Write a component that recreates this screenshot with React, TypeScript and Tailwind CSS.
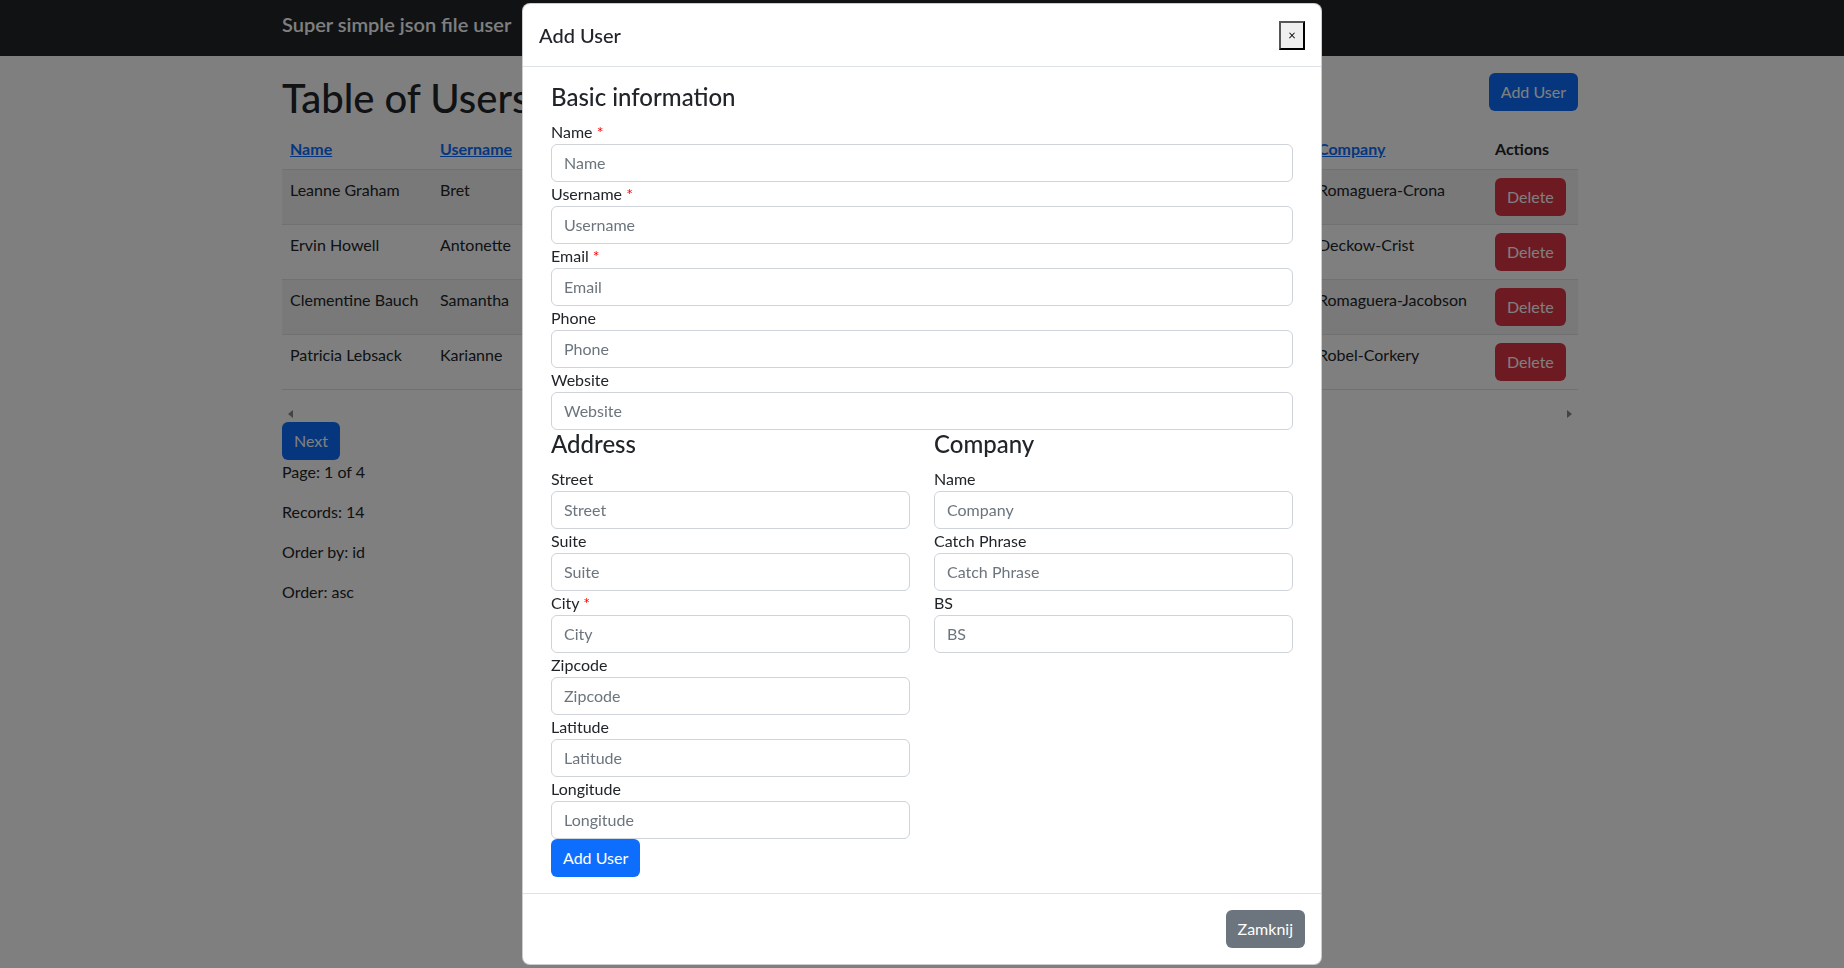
import React from 'react';

interface User {
  name: string;
  username: string;
  company: string;
}

const users: User[] = [
  { name: 'Leanne Graham', username: 'Bret', company: 'Romaguera-Crona' },
  { name: 'Ervin Howell', username: 'Antonette', company: 'Deckow-Crist' },
  { name: 'Clementine Bauch', username: 'Samantha', company: 'Romaguera-Jacobson' },
  { name: 'Patricia Lebsack', username: 'Karianne', company: 'Robel-Corkery' },
];

interface FieldProps {
  label: string;
  placeholder: string;
  required?: boolean;
}

const Field: React.FC<FieldProps> = ({ label, placeholder, required }) => (
  <div>
    <label className="block leading-[24px]">
      {label}
      {required && <span className="text-[#ff0000]"> *</span>}
    </label>
    <input
      placeholder={placeholder}
      className="block w-full h-[38px] px-[12px] bg-white border border-[#ced4da] rounded-[6px] text-[16px] placeholder:text-[#6c757d] outline-none"
    />
  </div>
);

const SortLink: React.FC<{ label: string }> = ({ label }) => (
  <a href="#" className="text-[#0d6efd] underline">{label}</a>
);

const App: React.FC = () => {
  return (
    <div className="min-h-screen bg-white text-[#212529] text-[16px] leading-[24px] font-[Lato,'Liberation_Sans',sans-serif]">
      <nav className="h-[56px] bg-[#212529]">
        <div className="ml-[282px] w-[1296px] pt-[9px]">
          <span className="text-white text-[20px] leading-[30px] font-semibold">
            Super simple json file user
          </span>
        </div>
      </nav>

      <main className="ml-[282px] w-[1296px] pt-[17px]">
        <div className="flex items-start justify-between">
          <h1 className="text-[40px] leading-[48px] font-medium mt-[1px] mb-[7px]">Table of Users</h1>
          <button className="h-[38px] px-[12px] rounded-[6px] bg-[#0d6efd] text-white">Add User</button>
        </div>

        {/* the middle columns sit under the open modal */}
        <table className="w-full table-fixed border-collapse mb-[16px]">
          <colgroup>
            <col className="w-[150px]" />
            <col className="w-[878px]" />
            <col className="w-[177px]" />
            <col className="w-[91px]" />
          </colgroup>
          <thead>
            <tr className="border-b border-[#dee2e6]">
              <th className="p-[8px] text-left font-bold"><SortLink label="Name" /></th>
              <th className="p-[8px] text-left font-bold"><SortLink label="Username" /></th>
              <th className="p-[8px] text-left font-bold"><SortLink label="Company" /></th>
              <th className="p-[8px] text-left font-bold">Actions</th>
            </tr>
          </thead>
          <tbody>
            {users.map((user, index) => (
              <tr
                key={index}
                className={`border-b border-[#dee2e6] ${index % 2 === 0 ? 'bg-[#f2f2f2]' : 'bg-white'}`}
              >
                <td className="p-[8px] align-top whitespace-nowrap">{user.name}</td>
                <td className="p-[8px] align-top whitespace-nowrap">{user.username}</td>
                <td className="p-[8px] align-top whitespace-nowrap">{user.company}</td>
                <td className="p-[8px] align-top">
                  <button className="h-[38px] px-[12px] rounded-[6px] bg-[#dc3545] text-white">Delete</button>
                </td>
              </tr>
            ))}
          </tbody>
        </table>

        <div className="h-[16px] flex items-center justify-between px-[6px]">
          <span className="w-0 h-0 border-y-[4px] border-y-transparent border-r-[5px] border-r-[#888888]" />
          <span className="w-0 h-0 border-y-[4px] border-y-transparent border-l-[5px] border-l-[#888888]" />
        </div>

        <button className="h-[38px] px-[12px] rounded-[6px] bg-[#0d6efd] text-white">Next</button>
        <p className="mb-[16px]">Page: 1 of 4</p>
        <p className="mb-[16px]">Records: 14</p>
        <p className="mb-[16px]">Order by: id</p>
        <p className="mb-[16px]">Order: asc</p>
      </main>

      <div className="fixed inset-0 bg-black/50" />

      <div className="fixed top-[3px] left-1/2 -translate-x-1/2 w-[800px] bg-white border border-black/20 rounded-[8px]">
        <div className="flex items-center justify-between p-[16px] border-b border-[#dee2e6]">
          <h5 className="text-[20px] leading-[30px] font-medium">Add User</h5>
          <button className="w-[26px] h-[29px] flex items-center justify-center bg-[#efefef] border-2 border-t-[#555555] border-l-[#555555] border-r-black border-b-black text-[13px] leading-none text-black">
            ×
          </button>
        </div>

        <div className="p-[16px]">
          <div className="px-[12px]">
            <h4 className="text-[24px] leading-[28.8px] font-medium mb-[8px]">Basic information</h4>
            <Field label="Name" placeholder="Name" required />
            <Field label="Username" placeholder="Username" required />
            <Field label="Email" placeholder="Email" required />
            <Field label="Phone" placeholder="Phone" />
            <Field label="Website" placeholder="Website" />

            <div className="flex -mx-[12px]">
              <div className="w-1/2 px-[12px]">
                <h4 className="text-[24px] leading-[28.8px] font-medium mb-[8px]">Address</h4>
                <Field label="Street" placeholder="Street" />
                <Field label="Suite" placeholder="Suite" />
                <Field label="City" placeholder="City" required />
                <Field label="Zipcode" placeholder="Zipcode" />
                <Field label="Latitude" placeholder="Latitude" />
                <Field label="Longitude" placeholder="Longitude" />
                <button className="h-[38px] px-[12px] rounded-[6px] bg-[#0d6efd] text-white">Add User</button>
              </div>
              <div className="w-1/2 px-[12px]">
                <h4 className="text-[24px] leading-[28.8px] font-medium mb-[8px]">Company</h4>
                <Field label="Name" placeholder="Company" />
                <Field label="Catch Phrase" placeholder="Catch Phrase" />
                <Field label="BS" placeholder="BS" />
              </div>
            </div>
          </div>
        </div>

        <div className="flex justify-end p-[12px] border-t border-[#dee2e6]">
          <button className="m-[4px] h-[38px] px-[12px] rounded-[6px] bg-[#6c757d] text-white">Zamknij</button>
        </div>
      </div>
    </div>
  );
};

export default App;
